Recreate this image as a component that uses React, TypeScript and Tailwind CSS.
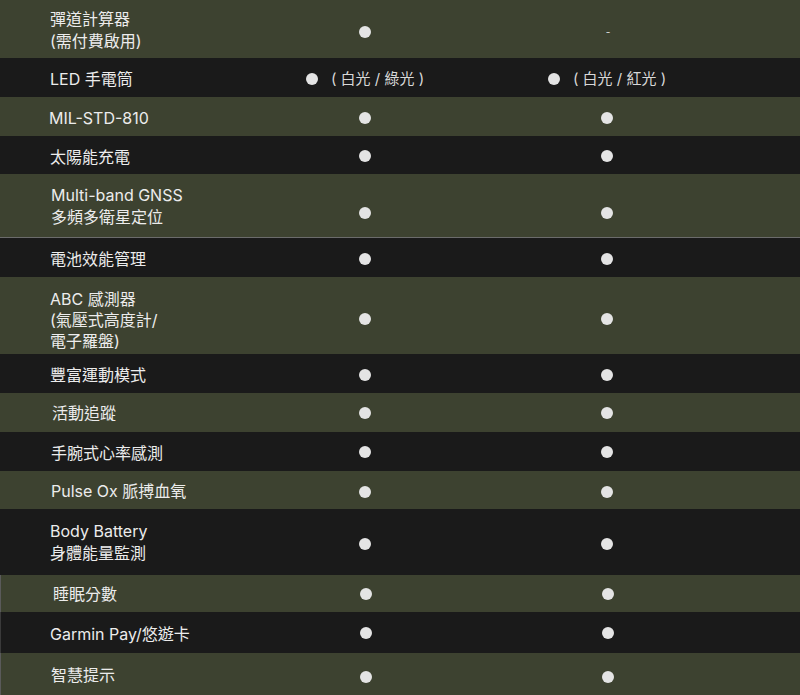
import React from "react";

type Cell = "dot" | "dash" | { label: string };
type Row = {
  lines: string[];
  h: string;
  bg: "olive" | "dark";
  pl: string;
  c2: Cell;
  c3: Cell;
  tp: string;
  dp: string;
  extra?: string;
};

const rows: Row[] = [
  { lines: ["彈道計算器", "(需付費啟用)"], h: "h-[58px]", bg: "olive", pl: "pl-[50px]", c2: "dot", c3: "dash", tp: "pt-[2px]", dp: "pt-[6px]" },
  { lines: ["LED 手電筒"], h: "h-[39px]", bg: "dark", pl: "pl-[50px]", c2: { label: "( 白光 / 綠光 )" }, c3: { label: "( 白光 / 紅光 )" }, tp: "pt-[2px]", dp: "pt-[2px]" },
  { lines: ["MIL-STD-810"], h: "h-[39px]", bg: "olive", pl: "pl-[49px]", c2: "dot", c3: "dot", tp: "pt-[2px]", dp: "pt-[2px]" },
  { lines: ["太陽能充電"], h: "h-[38px]", bg: "dark", pl: "pl-[50px]", c2: "dot", c3: "dot", tp: "pt-[4px]", dp: "pt-[2px]" },
  { lines: ["Multi-band GNSS", "多頻多衛星定位"], h: "h-[64px]", bg: "olive", pl: "pl-[51px]", c2: "dot", c3: "dot", tp: "pt-[0px]", dp: "pt-[14px]", extra: "border-b border-[#6b6b6b]" },
  { lines: ["電池效能管理"], h: "h-[39px]", bg: "dark", pl: "pl-[50px]", c2: "dot", c3: "dot", tp: "pt-[2px]", dp: "pt-[2px]" },
  { lines: ["ABC 感測器", "(氣壓式高度計/", "電子羅盤)"], h: "h-[77px]", bg: "olive", pl: "pl-[50px]", c2: "dot", c3: "dot", tp: "pt-[10px]", dp: "pt-[6px]" },
  { lines: ["豐富運動模式"], h: "h-[39px]", bg: "dark", pl: "pl-[50px]", c2: "dot", c3: "dot", tp: "pt-[2px]", dp: "pt-[2px]" },
  { lines: ["活動追蹤"], h: "h-[39px]", bg: "olive", pl: "pl-[52px]", c2: "dot", c3: "dot", tp: "pt-[0px]", dp: "pt-[1px]" },
  { lines: ["手腕式心率感測"], h: "h-[39px]", bg: "dark", pl: "pl-[51px]", c2: "dot", c3: "dot", tp: "pt-[2px]", dp: "pt-[1px]" },
  { lines: ["Pulse Ox 脈搏血氧"], h: "h-[38px]", bg: "olive", pl: "pl-[51px]", c2: "dot", c3: "dot", tp: "pt-[2px]", dp: "pt-[3px]" },
  { lines: ["Body Battery", "身體能量監測"], h: "h-[66px]", bg: "dark", pl: "pl-[50px]", c2: "dot", c3: "dot", tp: "pt-[0px]", dp: "pt-[3px]" },
  { lines: ["睡眠分數"], h: "h-[37px]", bg: "olive", pl: "pl-[52px]", c2: "dot", c3: "dot", tp: "pt-[0px]", dp: "pt-[1px]", extra: "border-l border-[#5a5a5a]" },
  { lines: ["Garmin Pay/悠遊卡"], h: "h-[41px]", bg: "dark", pl: "pl-[49px]", c2: "dot", c3: "dot", tp: "pt-[2px]", dp: "pt-[1px]", extra: "border-l border-[#3a3a3a]" },
  { lines: ["智慧提示"], h: "h-[42px]", bg: "olive", pl: "pl-[50px]", c2: "dot", c3: "dot", tp: "pt-[2px]", dp: "pt-[5px]", extra: "border-l border-[#5a5a5a]" },
];

function Dot() {
  return <span className="block w-[12px] h-[12px] rounded-full bg-[#e4e4e4]" />;
}

function CellView({ c }: { c: Cell }) {
  if (c === "dot") return <Dot />;
  if (c === "dash") return <span className="text-[10px] leading-none text-[#e4e4e4] pl-[2px]">-</span>;
  return (
    <span className="flex items-center gap-[13px]">
      <Dot />
      <span className="text-[15px] leading-none text-[#d8d8d8]">{c.label}</span>
    </span>
  );
}

export default function App() {
  return (
    <div
      className="w-[800px] h-[695px] overflow-hidden bg-[#1a1a1a] text-[#ececec]"
      style={{ fontFamily: 'Inter, "Noto Sans CJK TC", "Noto Sans", sans-serif' }}
    >
      {rows.map((r, i) => (
        <div
          key={i}
          className={`grid grid-cols-[244px_242px_242px_1fr] ${r.h} ${
            r.bg === "olive" ? "bg-[#3d4230]" : "bg-[#1a1a1a]"
          } ${r.extra ?? ""}`}
        >
          <div className={`${r.pl} ${r.tp} flex flex-col justify-center text-[16px] leading-[22px]`}>
            {r.lines.map((l, j) => (
              <div key={j} className={r.lines.length === 3 ? "leading-[21px]" : ""}>
                {l}
              </div>
            ))}
          </div>
          <div className={`${r.dp} flex justify-center items-center`}>
            <CellView c={r.c2} />
          </div>
          <div className={`${r.dp} flex justify-center items-center`}>
            <CellView c={r.c3} />
          </div>
          <div />
        </div>
      ))}
    </div>
  );
}
